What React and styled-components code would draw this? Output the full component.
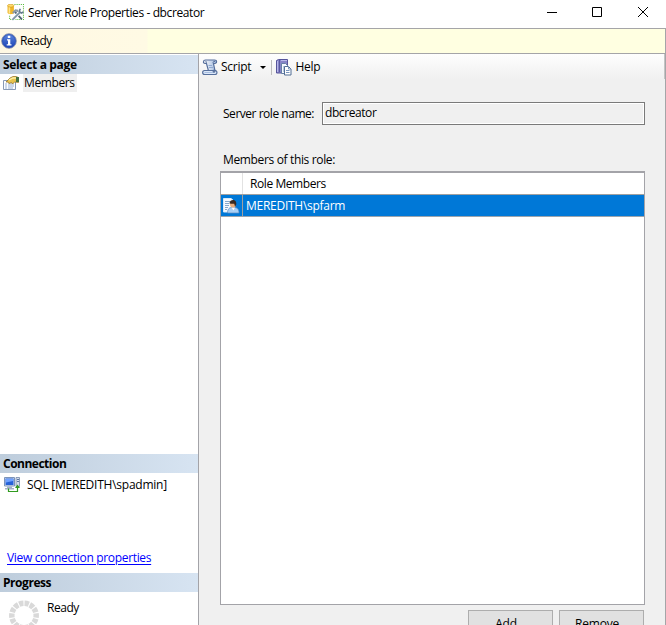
import React from 'react';
import styled, { createGlobalStyle } from 'styled-components';

const GlobalStyle = createGlobalStyle`
  * {
    box-sizing: border-box;
  }
  body {
    margin: 0;
    overflow: hidden;
    font-family: "Open Sans", "Noto Sans", sans-serif;
    font-size: 12px;
    line-height: 16px;
    color: #000;
  }
  svg {
    display: block;
    flex: none;
  }
`
const Window = styled.div`
  width: 666px;
  height: 625px;
  display: flex;
  flex-direction: column;
  overflow: hidden;
  background: #fff;
`
const Text = styled.span`
  white-space: nowrap;
  letter-spacing: ${p => p.$spacing || 0}px;
`
const TitleBar = styled.header`
  height: 28px;
  flex: none;
  display: flex;
  align-items: flex-start;
  padding: 5px 17px 0 6px;
`
const TitleIcon = styled.div`
  width: 18px;
  margin: -1px 0 0 1px;
`
const Title = styled(Text)`
  margin-left: 3px;
  flex: 1;
`
const WindowButtons = styled.div`
  display: flex;
  gap: 33px;
  padding-top: 1px;
`
const Frame = styled.div`
  flex: 1;
  min-height: 0;
  display: flex;
  flex-direction: column;
  border-top: 1px solid #a5a5a8;
  border-right: 1px solid #a5a5a8;
`
const StatusBar = styled.div`
  height: 25px;
  flex: none;
  display: flex;
  align-items: flex-start;
  gap: 3px;
  padding: 4px 0 0 1px;
  background: linear-gradient(90deg, #fff8e3 0, #fffae4 147px, #ffffe1 148px);
  border-bottom: 1px solid #a5a5a8;
`
const Content = styled.div`
  flex: 1;
  min-height: 0;
  display: flex;
`
const Sidebar = styled.aside`
  width: 199px;
  flex: none;
  display: flex;
  flex-direction: column;
  padding-top: 1px;
  border-right: 1px solid #a3a3a8;
`
const SectionTitle = styled.h2`
  height: 19px;
  flex: none;
  margin: 0;
  padding: 1px 0 0 3px;
  font-size: 12px;
  line-height: 17px;
  font-weight: 700;
  letter-spacing: ${p => p.$spacing}px;
  background: linear-gradient(90deg, #becddc, #d7e4f2);
`
const Pages = styled.div`
  height: 380px;
  flex: none;
`
const PageItem = styled.div`
  height: 18px;
  display: flex;
  align-items: center;
  padding-left: 3px;
  gap: 4px;
`
const PageName = styled(Text)`
  height: 18px;
  padding: 0 2px 0 1px;
  line-height: 18px;
  background: #efefef;
`
const Connection = styled.div`
  height: 100px;
  flex: none;
  display: flex;
  flex-direction: column;
  justify-content: space-between;
  align-items: flex-start;
  padding: 4px 0 7px 4px;
`
const Server = styled.div`
  display: flex;
  gap: 7px;
`
const Link = styled.a`
  margin-left: 3px;
  color: #00f;
  text-decoration: underline;
  text-underline-offset: 2px;
  white-space: nowrap;
  letter-spacing: -0.33px;
`
const Progress = styled.div`
  flex: 1;
  min-height: 0;
  display: flex;
  gap: 7px;
  padding: 8px 0 0 9px;
`
const Main = styled.main`
  flex: 1;
  min-width: 0;
  background: #f0f0f0;
`
const ToolBar = styled.div`
  height: 25px;
  display: flex;
  align-items: flex-start;
  padding: 5px 0 0 3px;
  background: linear-gradient(#fefefe, #f0f0f0);
  border-right: 1px solid #c4c4c4;
`
const ToolLabel = styled(Text)`
  margin-left: ${p => p.$gap}px;
`
const Caret = styled.i`
  margin: 7px 5px 0 9px;
  border: 3px solid transparent;
  border-top-color: #000;
  border-bottom: 0;
`
const Separator = styled.i`
  width: 1px;
  height: 15px;
  margin: 1px 4px 0 0;
  background: #bdbdbd;
`
const Form = styled.div`
  padding: 23px 20px 0 21px;
`
const Field = styled.div`
  height: 23px;
  display: flex;
  align-items: center;
  padding-left: 3px;
`
const FieldLabel = styled(Text)`
  width: 99px;
  flex: none;
`
const Input = styled.div`
  flex: 1;
  height: 23px;
  padding: 1px 2px;
  line-height: 18px;
  border: 1px solid #7a7a7a;
  box-shadow: inset 0 0 0 1px #fff;
  letter-spacing: -0.42px;
`
const ListLabel = styled(Text)`
  display: block;
  margin: 27px 0 3px 3px;
`
const List = styled.div`
  height: 434px;
  background: #fff;
  border: 1px solid #a3a3a8;
  border-top: 2px solid #a3a3a8;
`
const Row = styled.div`
  height: 22px;
  display: flex;
  color: ${p => (p.$selected ? '#fff' : '#000')};
  background: ${p => (p.$selected ? '#0078d7' : '#fff')};
  border-bottom: 1px solid ${p => (p.$selected ? '#9aa4ae' : '#a0a0a0')};
`
const IconCell = styled.div`
  width: 22px;
  flex: none;
  padding: 3px 0 0 2px;
  border-right: 1px solid ${p => (p.$selected ? '#a0a0a0' : '#e2e2e2')};
`
const Cell = styled.div`
  flex: 1;
  line-height: 21px;
  padding-left: ${p => p.$indent}px;
  letter-spacing: ${p => p.$spacing}px;
`
const Buttons = styled.div`
  display: flex;
  justify-content: flex-end;
  gap: 6px;
  padding: 5px 1px 0 0;
`
const Button = styled.button`
  width: 85px;
  height: 26px;
  flex: none;
  padding: 1px 0 0;
  font: inherit;
  letter-spacing: -0.2px;
  color: #000;
  background: #e1e1e1;
  border: 1px solid #adadad;
  border-radius: 0;
`

const RoleIcon = () => (
  <svg width="17" height="17" viewBox="0 0 16 16">
    <path d="M7 .5h8.500v14H2.500v-4" fill="none" stroke="#58b83b" strokeDasharray="1 1" />
    <path d="M.5 1.500v7c1.500 1.500 4.500 1.500 6 0v-7z" fill="#efb629" />
    <path d="M1.500 2v7H3V2z" fill="#ffe38b" />
    <ellipse cx="3.500" cy="1.600" rx="3" ry="1.300" fill="#ffdd6c" stroke="#c68b13" strokeWidth=".5" />
    <path d="M7.500 7.500l6.500 7" stroke="#4f6475" strokeWidth="1.700" />
    <path d="M5.500 8.500L8 6l2.500.5" fill="none" stroke="#8b9aa5" strokeWidth="2" />
    <path d="M5 15l7-7" stroke="#fff" strokeWidth="3" />
    <path d="M5 15l7-7" stroke="#7e96a8" strokeWidth="1.700" />
    <path d="M12.500 4.500l-1 2.500 2 1.500 2-1" fill="none" stroke="#647b8e" strokeWidth="1.500" />
  </svg>
)

const InfoIcon = () => (
  <svg width="16" height="16" viewBox="0 0 16 16">
    <defs>
      <linearGradient id="info" x2="0" y2="1">
        <stop stopColor="#6189dc" />
        <stop offset="1" stopColor="#173fb4" />
      </linearGradient>
    </defs>
    <circle cx="8" cy="8" r="7.300" fill="url(#info)" stroke="#8f97ad" />
    <circle cx="8" cy="8" r="6.400" fill="none" stroke="#2b51b9" strokeWidth=".8" />
    <path d="M6.800 2.800h2.500v2.200H6.800zM6 6.200h3.300v5h1.200v1.300H5.700v-1.300H7V7.500H6z" fill="#fff" />
  </svg>
)

const PropertiesIcon = () => (
  <svg width="16" height="15" viewBox="0 0 16 15">
    <path d="M.5 4.500h12v9H.5z" fill="#fcfdff" stroke="#8799b5" />
    <path d="M2 8h2m1 0h6M2 10h2m1 0h6M2 12h2m1 0h5" stroke="#9ab1d3" />
    <path d="M3 6l4-4 3-1.500h3l2.500 1v5l-4-.5-2 2-1-1.500L6 7.500 5 6z" fill="#e8c34d" stroke="#8f6e20" strokeWidth=".7" />
    <path d="M6 4l4-2h3" fill="none" stroke="#fff2a8" strokeWidth="1.300" />
    <path d="M13 1h3v5h-3z" fill="#46733f" />
  </svg>
)

const ScriptIcon = () => (
  <svg width="16" height="17" viewBox="0 0 16 17">
    <defs>
      <linearGradient id="scroll">
        <stop stopColor="#fff" />
        <stop offset="1" stopColor="#9fb8de" />
      </linearGradient>
    </defs>
    <path d="M3.500 1h9c2.800 0 2.600 3.500.3 3.500h-1.300L13 12H6.500L4.500 4.500H3C.8 4.500 1 1 3.500 1z" fill="url(#scroll)" stroke="#566f9c" strokeWidth="1.200" />
    <path d="M3 4.300c1.800 0 2-2 .5-2M11.500 4.300c-1-1 0-2.300 1.500-1.800" fill="none" stroke="#566f9c" />
    <path d="M2.500 11.500h9c-.8 1 0 2 1 1.500.6-.5.5-1.300 0-1.700 3-.3 3.300 4.200.5 4.200H2.700c-2.700 0-2.700-4-.2-4z" fill="#dce8f9" stroke="#566f9c" strokeWidth="1.200" />
    <path d="M2.500 13.500H11" stroke="#a8bee1" />
    <path d="M6.500 6.500h3.500M7 8.500h4" stroke="#91aad2" />
  </svg>
)

const HelpIcon = () => (
  <svg width="17" height="17" viewBox="0 0 17 17">
    <path d="M.5 1.500l2-1h9V14H.5z" fill="#8684c7" stroke="#56549a" />
    <path d="M3.500 1v12" stroke="#5b59a0" />
    <path d="M1.500 2v11M5 1.500h6" stroke="#b9b8e9" />
    <path d="M5.500 4.500h4l2 2v8h-6z" fill="#f5f9ff" stroke="#6680a5" />
    <path d="M8.500 7.500h4L15 10v6H8.500z" fill="#fff" stroke="#526e95" />
    <path d="M12.500 7.500V10H15M10 11.500h3.500M10 13.500h3.500M7 8h1M7 10h1M7 12h1" fill="none" stroke="#7895bd" />
  </svg>
)

const UserIcon = () => (
  <svg width="17" height="16" viewBox="0 0 17 16">
    <path d="M.5.5H8l2.500 2V14H.5z" fill="#f6faff" stroke="#d6e8fa" />
    <path d="M2 3.500h5M2 5.500h4M2 7.500h4M2 9.500h3M2 11.500h2" stroke="#87a8cc" />
    <path d="M4.500 15c0-4 2-5.500 4-5.500h3c2.500 0 4.500 1.500 4.500 5.500z" fill="#a9d0f6" stroke="#5c8abe" strokeWidth=".7" />
    <path d="M8.500 9.500l2 3 1.500-3z" fill="#fff" />
    <circle cx="10" cy="6.500" r="3" fill="#e7ad7e" />
    <path d="M6.500 5.500C6.500 1.500 12 1 13 4c.8 2 0 4-1 4.500l-.8-2.800C9.500 6 8 5.500 6.500 5.500z" fill="#382a22" />
  </svg>
)

const ServerIcon = () => (
  <svg width="16" height="16" viewBox="0 0 16 16">
    <path d="M.5 .5h10v8.500H.5z" fill="#d8e2f0" stroke="#7b93b9" />
    <path d="M1.500 1.500h8v6.500h-8z" fill="#2561d8" />
    <path d="M2 2h7v2l-7 1.500z" fill="#6ea1ff" />
    <path d="M3 9.500h5V11H3zM1 11h9v1.500H1z" fill="#a3b1c8" />
    <path d="M12 .5h3.500v9H12z" fill="#d3dceb" stroke="#7186a8" strokeWidth=".8" />
    <path d="M13 2.500h2M13 4.500h2" stroke="#5e77a0" />
    <path d="M4.500 11.500v3h9V10" fill="none" stroke="#319b1f" strokeWidth="1.200" />
    <path d="M11 11l2.500-3.500L16 11z" fill="#319b1f" />
  </svg>
)

const Spinner = () => (
  <svg width="31" height="31" viewBox="0 0 31 31">
    <circle cx="15" cy="15.500" r="12.200" fill="none" stroke="#d9d9d9" strokeWidth="5.500" pathLength="140" strokeDasharray="8 2" strokeDashoffset="4" />
  </svg>
)

function App() {
  return (
    <>
      <GlobalStyle />
      <Window>
        <TitleBar>
          <TitleIcon><RoleIcon /></TitleIcon>
          <Title $spacing={-0.4}>Server Role Properties - dbcreator</Title>
          <WindowButtons>
            <svg width="12" height="12"><path d="M1 6.500h10" stroke="#000" /></svg>
            <svg width="12" height="12"><path d="M1.500 1.500h9v9h-9z" fill="none" stroke="#000" /></svg>
            <svg width="13" height="12"><path d="M2 1l10 10M12 1L2 11" stroke="#000" /></svg>
          </WindowButtons>
        </TitleBar>
        <Frame>
          <StatusBar>
            <InfoIcon />
            <Text $spacing={-0.45}>Ready</Text>
          </StatusBar>
          <Content>
            <Sidebar>
              <SectionTitle $spacing={-0.33}>Select a page</SectionTitle>
              <Pages>
                <PageItem>
                  <PropertiesIcon />
                  <PageName $spacing={-0.4}>Members</PageName>
                </PageItem>
              </Pages>
              <SectionTitle $spacing={-0.5}>Connection</SectionTitle>
              <Connection>
                <Server>
                  <ServerIcon />
                  <Text $spacing={-0.24}>SQL [MEREDITH\spadmin]</Text>
                </Server>
                <Link>View connection properties</Link>
              </Connection>
              <SectionTitle $spacing={-0.45}>Progress</SectionTitle>
              <Progress>
                <Spinner />
                <Text $spacing={-0.45}>Ready</Text>
              </Progress>
            </Sidebar>
            <Main>
              <ToolBar>
                <ScriptIcon />
                <ToolLabel $gap={3} $spacing={-0.25}>Script</ToolLabel>
                <Caret />
                <Separator />
                <HelpIcon />
                <ToolLabel $gap={2} $spacing={-0.25}>Help</ToolLabel>
              </ToolBar>
              <Form>
                <Field>
                  <FieldLabel $spacing={-0.47}>Server role name:</FieldLabel>
                  <Input>dbcreator</Input>
                </Field>
                <ListLabel $spacing={-0.35}>Members of this role:</ListLabel>
                <List>
                  <Row>
                    <IconCell />
                    <Cell $indent={7} $spacing={-0.42}>Role Members</Cell>
                  </Row>
                  <Row $selected>
                    <IconCell $selected><UserIcon /></IconCell>
                    <Cell $indent={3} $spacing={-0.27}>MEREDITH\spfarm</Cell>
                  </Row>
                </List>
                <Buttons>
                  <Button>Add...</Button>
                  <Button>Remove...</Button>
                </Buttons>
              </Form>
            </Main>
          </Content>
        </Frame>
      </Window>
    </>
  )
}

export default App
